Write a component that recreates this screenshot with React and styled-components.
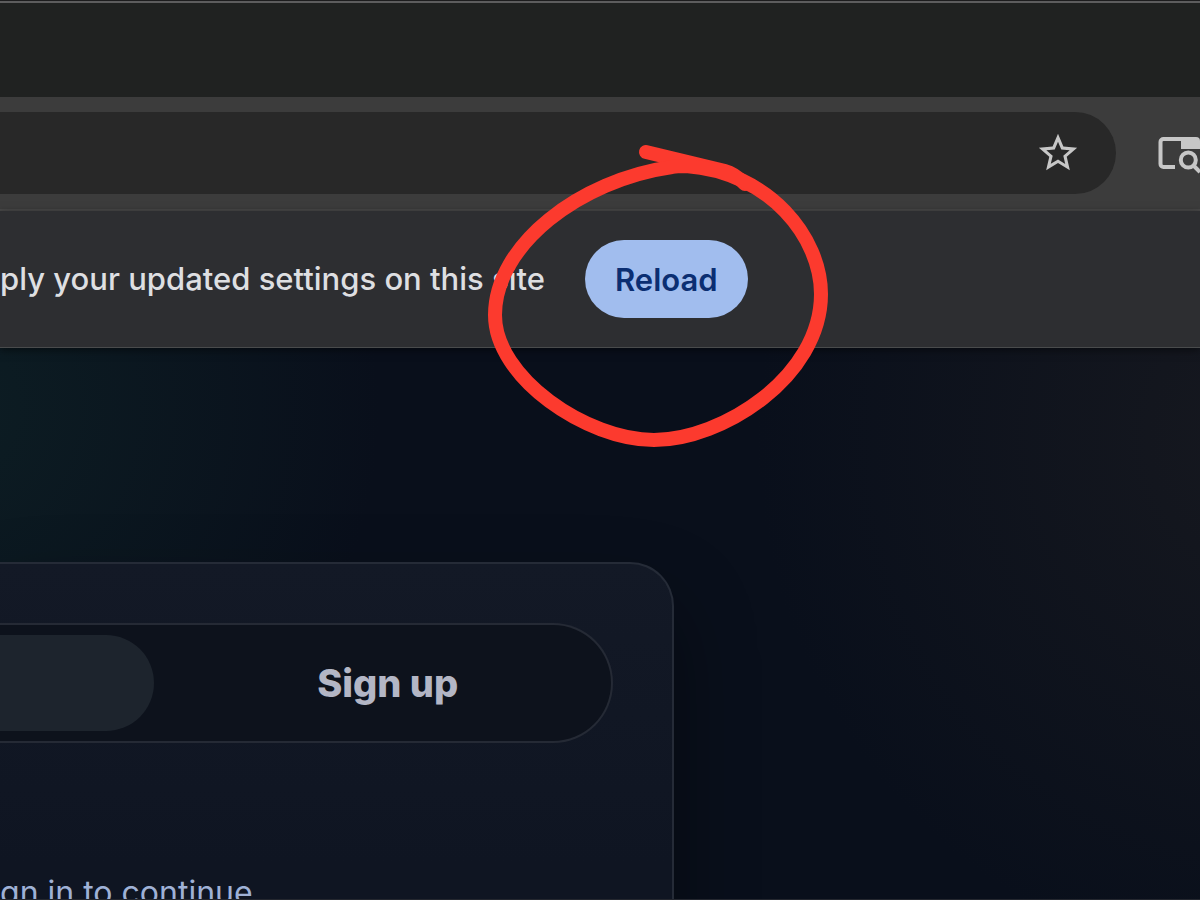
import React from "react";
import styled, { createGlobalStyle, css } from "styled-components";
import { MdStarBorder } from "react-icons/md";

const GlobalStyle = createGlobalStyle`
  * {
    box-sizing: border-box;
  }
  body {
    margin: 0;
    background-color: #090f1b;
    overflow: hidden;
  }
  button {
    border: 0;
    font: inherit;
    cursor: pointer;
  }
`;

const Window = styled.div`
  display: flex;
  flex-direction: column;
  height: 100vh;
  overflow: hidden;
  border-bottom: 1px solid #24272f;
  font-family: Inter, sans-serif;
  font-optical-sizing: none;
`;

const TabStrip = styled.div`
  flex-shrink: 0;
  height: 97px;
  background-color: #202221;
  border-top: 1px solid #1d1d1e;
  box-shadow: inset 0 2px 0 #5d5d5e;
`;

const Toolbar = styled.div`
  flex-shrink: 0;
  display: flex;
  align-items: center;
  column-gap: 36px;
  height: 114px;
  background-color: #3c3c3c;
  border-bottom: 2px solid #484848;
  overflow: hidden;
`;

const Omnibox = styled.div`
  flex: 1;
  display: flex;
  justify-content: flex-end;
  height: 82px;
  padding-right: 35px;
  background-color: #282828;
  border-radius: 0 41px 41px 0;
`;

const IconButton = styled.button`
  display: flex;
  align-items: center;
  flex-shrink: 0;
  padding: 0;
  background: none;
  color: #c7c7c7;
  svg {
    display: block;
  }
`;

const ToolbarEnd = styled.div`
  flex: 0 0 48px;
`;

const InfoBar = styled.div`
  position: relative;
  z-index: 10;
  flex-shrink: 0;
  display: flex;
  align-items: center;
  column-gap: 40px;
  height: 137px;
  background-color: #2d2e31;
  border-bottom: 1px solid #494b4c;
  box-shadow: 0 2px 8px rgba(0, 0, 0, 0.5);
`;

const Message = styled.p`
  min-width: 545px;
  margin: 0;
  font-size: 31px;
  font-weight: 500;
  line-height: 40px;
  text-align: right;
  white-space: nowrap;
  color: #dedfe1;
`;

const Highlight = styled.div`
  position: relative;
  .marker {
    position: absolute;
    left: -105px;
    top: -100px;
    pointer-events: none;
  }
`;

const ReloadButton = styled.button`
  display: block;
  height: 78px;
  padding: 0 30px;
  border-radius: 39px;
  background-color: #a1bdee;
  color: #0b2e72;
  && {
    font-size: 31px;
    font-weight: 600;
  }
`;

const Page = styled.main`
  flex: 1;
  min-height: 0;
  padding-top: 214px;
  background: radial-gradient(
      circle at -60px 60px,
      rgba(16, 44, 44, 0.5),
      transparent 440px
    ),
    radial-gradient(
      circle at 108% 16%,
      rgba(32, 31, 34, 0.6),
      transparent 540px
    ),
    #090f1b;
`;

const Card = styled.section`
  width: 56.2%;
  height: 400px;
  padding: 59px 59px 0 0;
  background: linear-gradient(180deg, #131926, #0f1522 300px);
  border: 2px solid #252b37;
  border-left: 0;
  border-radius: 0 44px 0 0;
  box-shadow: 0 40px 80px rgba(0, 0, 0, 0.4);
`;

const Tabs = styled.div`
  display: grid;
  grid-template-columns: 154px 1fr;
  column-gap: 20px;
  height: 120px;
  padding: 10px 10px 10px 0;
  background-color: #0d121c;
  border: 2px solid #252a35;
  border-left: 0;
  border-radius: 0 60px 60px 0;
`;

const Tab = styled.button`
  padding: 0;
  background: none;
  color: #b3b6c5;
  && {
    font-size: 38px;
    font-weight: 800;
  }
  ${(props) =>
    props.$active &&
    css`
      background-color: #1d242d;
      border-radius: 0 48px 48px 0;
    `};
`;

const Hint = styled.p`
  margin: 130px 0 0;
  font-size: 32px;
  line-height: 40px;
  white-space: nowrap;
  color: #9fb1d6;
`;

function TabSearchIcon() {
  return (
    <svg width="48" height="48" viewBox="0 0 48 48" fill="none">
      <path
        d="M23 38H11.500a3 3 0 0 1-3-3V13a3 3 0 0 1 3-3H44"
        stroke="currentColor"
        strokeWidth="4"
      />
      <path d="M29 8h15a4 4 0 0 1 4 4v8H29z" fill="currentColor" />
      <circle cx="36.300" cy="31" r="7.500" stroke="currentColor" strokeWidth="4" />
      <path d="M41.500 36.500l6.500 6.500" stroke="currentColor" strokeWidth="4" />
    </svg>
  );
}

function Marker() {
  return (
    <svg
      className="marker"
      width="350"
      height="320"
      viewBox="480 140 350 320"
      fill="none"
      stroke="#fc3a2e"
      strokeWidth="14"
      strokeLinecap="round"
      strokeLinejoin="round"
    >
      <path d="M646 152L725 171C733 173 738 177 745 184" />
      <path d="M686 166C680 166 676 166 672 167C580 180 495 245 495 315C495 378 587 440 654 440C722 440 821 377 821 294C821 238 770 172 686 166Z" />
    </svg>
  );
}

export default function App() {
  return (
    <>
      <GlobalStyle />
      <Window>
        <TabStrip />
        <Toolbar>
          <Omnibox>
            <IconButton aria-label="Bookmark this page">
              <MdStarBorder size={46} />
            </IconButton>
          </Omnibox>
          <ToolbarEnd>
            <IconButton aria-label="Search tabs">
              <TabSearchIcon />
            </IconButton>
          </ToolbarEnd>
        </Toolbar>
        <InfoBar>
          <Message>ply your updated settings on this site</Message>
          <Highlight>
            <ReloadButton>Reload</ReloadButton>
            <Marker />
          </Highlight>
        </InfoBar>
        <Page>
          <Card>
            <Tabs>
              <Tab $active aria-label="Sign in" />
              <Tab>Sign up</Tab>
            </Tabs>
            <Hint>gn in to continue</Hint>
          </Card>
        </Page>
      </Window>
    </>
  );
}
